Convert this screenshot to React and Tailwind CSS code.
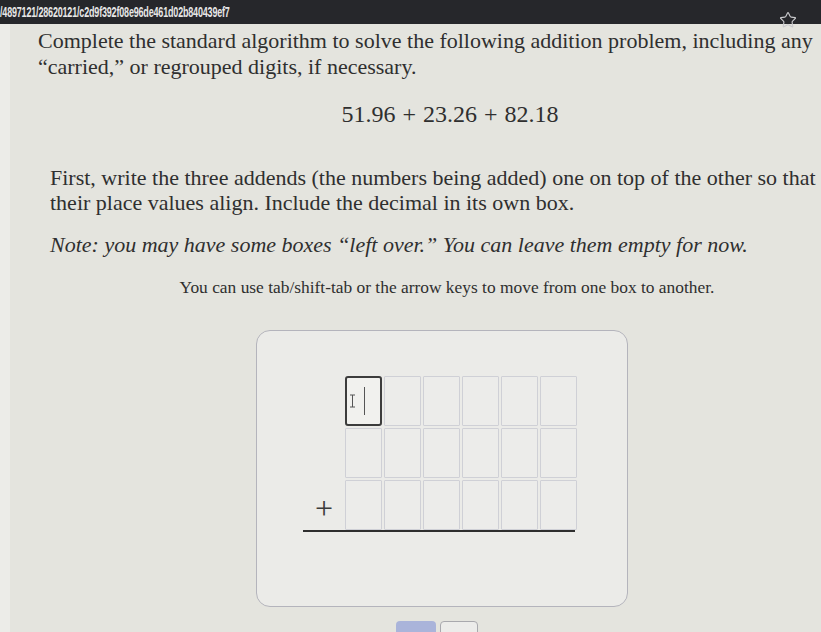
import { Star } from "lucide-react";

const serif = { fontFamily: '"Liberation Serif", "DejaVu Serif", serif' };

function Cell({ focused }) {
  if (focused) {
    return (
      <div className="relative h-[50px] w-[37px] rounded-[3px] border-2 border-[#3c3c3c] bg-[#f1f1ee]">
        <span className="absolute left-[17px] top-[9px] h-[28px] w-px bg-[#555]" />
        <svg className="absolute left-[2px] top-[16px]" width="7" height="14" viewBox="0 0 7 14">
          <path d="M1 1h5M3.5 1v12M1 13h5" stroke="#555" strokeWidth="1" fill="none" />
        </svg>
      </div>
    );
  }
  return <div className="h-[50px] w-[37px] rounded-[1px] border border-[#cfd0d6] bg-[#ececea]" />;
}

export default function App() {
  const cells = Array.from({ length: 18 }, (_, i) => i);

  return (
    <div className="relative h-[632px] w-[821px] overflow-hidden bg-[#e4e4de] text-[#2f2f2f]" style={serif}>
      <div className="flex h-[24px] items-center justify-between bg-[#26272b] pr-[24px]">
        <span
          className="origin-left scale-x-[0.6] whitespace-nowrap text-[15px] font-semibold tracking-[-0.3px] text-[#e6e6e6]"
          style={{ fontFamily: '"Liberation Sans", Arial, sans-serif' }}
        >
          /4897121/28620121/c2d9f392f08e96de461d02b840439ef7
        </span>
        <Star className="mt-[16px] h-[18px] w-[18px] text-[#c9c9cc]" strokeWidth={1.5} />
      </div>

      <div className="flex">
        <div className="w-[10px] shrink-0 bg-[#ecece8]" />
        <div className="w-[840px] shrink-0 pl-[40px]">
          <p className="-ml-[12px] mt-[4px] whitespace-nowrap text-[22px] leading-[26px]">
            Complete the standard algorithm to solve the following addition problem, including any
            <br />
            “carried,” or regrouped digits, if necessary.
          </p>

          <p className="mt-[21px] flex justify-center gap-[7px] text-[24px] leading-[26px]">
            <span>51.96</span>
            <span>+</span>
            <span>23.26</span>
            <span>+</span>
            <span>82.18</span>
          </p>

          <p className="mt-[38px] whitespace-nowrap text-[22px] leading-[25px]">
            First, write the three addends (the numbers being added) one on top of the other so that
            <br />
            their place values align. Include the decimal in its own box.
          </p>

          <p className="mt-[17px] whitespace-nowrap text-[22px] italic leading-[26px]">
            Note: you may have some boxes “left over.” You can leave them empty for now.
          </p>

          <p className="mt-[18px] whitespace-nowrap pr-[6px] text-center text-[17.4px] leading-[22px]">
            You can use tab/shift-tab or the arrow keys to move from one box to another.
          </p>

          <div className="ml-[206px] mt-[32px] h-[277px] w-[372px] rounded-[14px] border-[1.5px] border-[#b4b4bc] bg-[#ebebe8] pl-[46px] pt-[45px]">
            <div className="flex w-[274px]">
              <div className="flex w-[42px] items-end justify-center pb-[6px]">
                <span className="text-[32px] font-light leading-[32px] text-[#3c3c3c]">+</span>
              </div>
              <div className="grid grid-cols-6 gap-[2px]">
                {cells.map((i) => (
                  <Cell key={i} focused={i === 0} />
                ))}
              </div>
            </div>
            <div className="h-[2px] w-[272px] bg-[#2e2e2e]" />
          </div>

          <div className="ml-[346px] mt-[14px] flex gap-[4px]">
            <div className="h-[24px] w-[40px] rounded-[4px] bg-[#aab4da]" />
            <div className="h-[24px] w-[38px] rounded-[4px] border border-[#a9a9ae] bg-[#ececea]" />
          </div>
        </div>
      </div>
    </div>
  );
}
